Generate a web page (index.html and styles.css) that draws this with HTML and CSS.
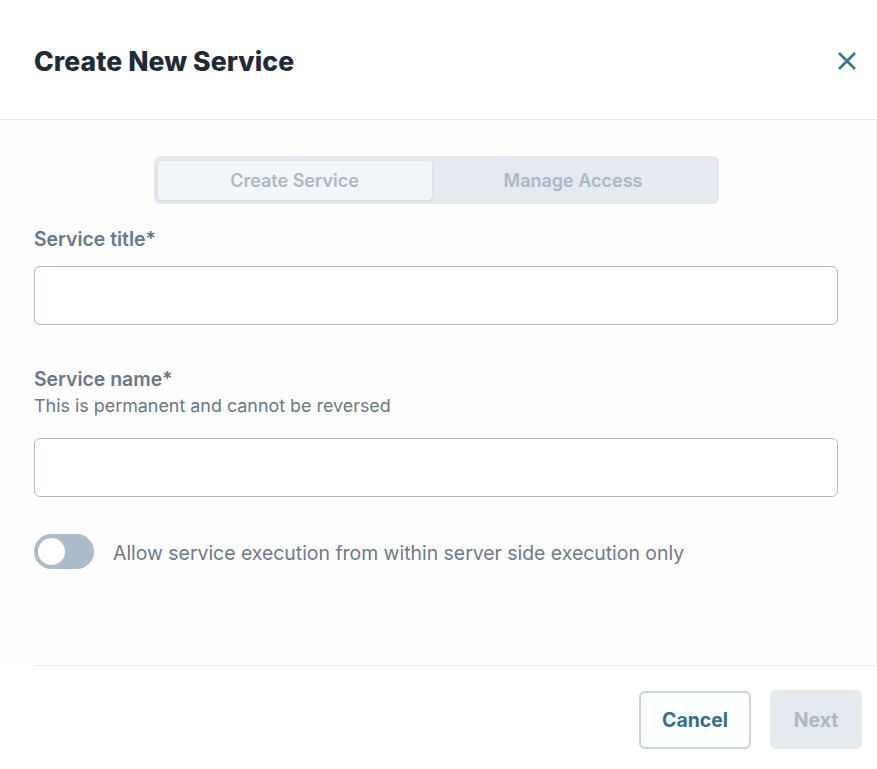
FILE: index.html
```html
<!DOCTYPE html>
<html lang="en">
<head>
<meta charset="utf-8">
<title>Create New Service</title>
<link rel="stylesheet" href="styles.css">
</head>
<body>
<div class="modal">
  <header class="modal-header">
    <h1 class="modal-title">Create New Service</h1>
    <button class="close-btn" aria-label="Close">
      <svg width="20" height="20" viewBox="0 0 20 20"><path d="M2 2 L18 18 M18 2 L2 18" stroke="#2f7a8e" stroke-width="2.6" stroke-linecap="butt" fill="none"/></svg>
    </button>
  </header>
  <section class="modal-body">
    <div class="tabs">
      <div class="tab tab-active">Create Service</div>
      <div class="tab">Manage Access</div>
    </div>
    <div class="field field-first">
      <label class="field-label">Service title*</label>
      <div class="input"></div>
    </div>
    <div class="field field-second">
      <label class="field-label">Service name*</label>
      <p class="field-help">This is permanent and cannot be reversed</p>
      <div class="input"></div>
    </div>
    <div class="toggle-row">
      <span class="toggle"><span class="knob"></span></span>
      <span class="toggle-label">Allow service execution from within server side execution only</span>
    </div>
  </section>
  <footer class="modal-footer">
    <button class="btn btn-cancel">Cancel</button>
    <button class="btn btn-next">Next</button>
  </footer>
</div>
</body>
</html>
```

FILE: styles.css
```css
* { box-sizing: border-box; }
html, body { margin: 0; padding: 0; background: #ffffff; }
body { font-family: Inter, "Noto Sans", sans-serif; }

.modal {
  width: 877px;
  height: 769px;
  background: #ffffff;
  display: flex;
  flex-direction: column;
}

.modal-header {
  height: 120px;
  border-bottom: 1px solid #e8e9eb;
  display: flex;
  align-items: center;
  justify-content: space-between;
  padding: 2px 20px 0 34px;
}
.modal-title {
  margin: 0;
  font-family: Inter, sans-serif;
  font-weight: 800;
  font-size: 26.5px;
  letter-spacing: 0.1px;
  color: #212b38;
}
.close-btn {
  background: none;
  border: none;
  padding: 0;
  width: 20px;
  height: 20px;
  display: flex;
  cursor: pointer;
}

.modal-body {
  flex: 1;
  padding: 36px 38px 0 34px;
  border-right: 1px solid #f0f1f3;
  background: #fefefe;
}

.tabs {
  width: 565px;
  height: 48px;
  margin: 0 auto;
  background: #e5eaf1;
  border-radius: 6px;
  padding: 5px 4px 4px 4px;
  display: flex;
}
.tab {
  flex: 1;
  display: flex;
  align-items: center;
  justify-content: center;
  font-size: 18px;
  font-weight: 600;
  color: #aab8c6;
  border-radius: 4px;
}
.tab-active {
  flex: 0 0 274px;
  background: #f2f6f9;
  box-shadow: 0 1px 3px rgba(120, 140, 160, 0.25);
}

.field { display: flex; flex-direction: column; }
.field-first { margin-top: 23px; }
.field-second { margin-top: 42px; }
.field-label {
  font-size: 19.4px;
  font-weight: 600;
  line-height: 24px;
  color: #66788b;
}
.field-first .field-label { margin-bottom: 15px; }
.field-help {
  margin: 4px 0 21px 0;
  font-size: 17.9px;
  line-height: 22px;
  color: #66788b;
}
.input {
  height: 59px;
  border: 1px solid #a9bbcc;
  border-radius: 6px;
  background: #ffffff;
}

.toggle-row {
  margin-top: 37px;
  display: flex;
  align-items: center;
  gap: 19px;
}
.toggle {
  width: 60px;
  height: 35px;
  border-radius: 18px;
  background: #abbbc9;
  display: flex;
  align-items: center;
  padding-left: 4px;
}
.knob {
  width: 27px;
  height: 27px;
  border-radius: 50%;
  background: #ffffff;
}
.toggle-label {
  font-size: 19.4px;
  color: #6a7b8d;
  padding-top: 3px;
}

.modal-footer {
  height: 104px;
  margin-left: 34px;
  border-top: 1px solid #e8e9eb;
  display: flex;
  justify-content: flex-end;
  align-items: flex-start;
  padding: 25px 15px 0 0;
  gap: 19px;
}
.btn {
  font-family: Inter, sans-serif;
  font-size: 19.4px;
  font-weight: 700;
  border-radius: 6px;
  cursor: pointer;
}
.btn-cancel {
  width: 112px;
  height: 58px;
  background: #ffffff;
  border: 2px solid #c4d8e0;
  color: #2f7189;
}
.btn-next {
  width: 92px;
  height: 59px;
  margin-top: -1px;
  background: #e5eaf1;
  border: none;
  color: #abb9c6;
}
```
